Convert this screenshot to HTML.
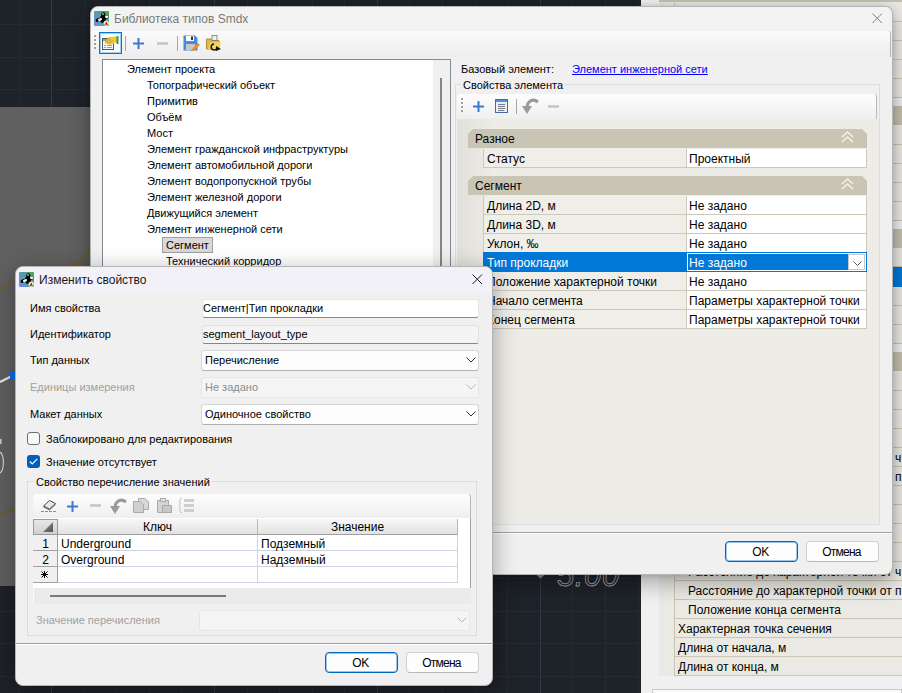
<!DOCTYPE html>
<html><head><meta charset="utf-8">
<style>
*{box-sizing:border-box;margin:0;padding:0}
html,body{width:902px;height:693px;overflow:hidden;background:#1e2229;position:relative;font-family:"Liberation Sans",sans-serif}
.a{position:absolute}
.t{position:absolute;font-size:11px;line-height:16px;white-space:nowrap;color:#000}
</style></head><body>

<!-- ===== BACKGROUND CAD ===== -->
<svg class="a" style="left:0;top:0" width="902" height="693">
  <g stroke="#262b33" stroke-width="1"><line x1="19.5" y1="0" x2="19.5" y2="693"/><line x1="84.5" y1="0" x2="84.5" y2="693"/><line x1="116.5" y1="0" x2="116.5" y2="693"/><line x1="149.5" y1="0" x2="149.5" y2="693"/><line x1="181.5" y1="0" x2="181.5" y2="693"/><line x1="247.5" y1="0" x2="247.5" y2="693"/><line x1="279.5" y1="0" x2="279.5" y2="693"/><line x1="312.5" y1="0" x2="312.5" y2="693"/><line x1="344.5" y1="0" x2="344.5" y2="693"/><line x1="409.5" y1="0" x2="409.5" y2="693"/><line x1="442.5" y1="0" x2="442.5" y2="693"/><line x1="475.5" y1="0" x2="475.5" y2="693"/><line x1="507.5" y1="0" x2="507.5" y2="693"/><line x1="572.5" y1="0" x2="572.5" y2="693"/><line x1="605.5" y1="0" x2="605.5" y2="693"/><line x1="638.5" y1="0" x2="638.5" y2="693"/><line x1="670.5" y1="0" x2="670.5" y2="693"/><line x1="735.5" y1="0" x2="735.5" y2="693"/><line x1="768.5" y1="0" x2="768.5" y2="693"/><line x1="800.5" y1="0" x2="800.5" y2="693"/><line x1="833.5" y1="0" x2="833.5" y2="693"/><line x1="898.5" y1="0" x2="898.5" y2="693"/><line x1="0" y1="24.5" x2="902" y2="24.5"/><line x1="0" y1="57.5" x2="902" y2="57.5"/><line x1="0" y1="89.5" x2="902" y2="89.5"/><line x1="0" y1="122.5" x2="902" y2="122.5"/><line x1="0" y1="154.5" x2="902" y2="154.5"/><line x1="0" y1="187.5" x2="902" y2="187.5"/><line x1="0" y1="220.5" x2="902" y2="220.5"/><line x1="0" y1="252.5" x2="902" y2="252.5"/><line x1="0" y1="285.5" x2="902" y2="285.5"/><line x1="0" y1="317.5" x2="902" y2="317.5"/><line x1="0" y1="350.5" x2="902" y2="350.5"/><line x1="0" y1="382.5" x2="902" y2="382.5"/><line x1="0" y1="415.5" x2="902" y2="415.5"/><line x1="0" y1="448.5" x2="902" y2="448.5"/><line x1="0" y1="480.5" x2="902" y2="480.5"/><line x1="0" y1="513.5" x2="902" y2="513.5"/><line x1="0" y1="545.5" x2="902" y2="545.5"/><line x1="0" y1="578.5" x2="902" y2="578.5"/><line x1="0" y1="611.5" x2="902" y2="611.5"/><line x1="0" y1="643.5" x2="902" y2="643.5"/><line x1="0" y1="676.5" x2="902" y2="676.5"/></g>
  <g stroke="#323844" stroke-width="1"><line x1="51.5" y1="0" x2="51.5" y2="693"/><line x1="214.5" y1="0" x2="214.5" y2="693"/><line x1="377.5" y1="0" x2="377.5" y2="693"/><line x1="540.5" y1="0" x2="540.5" y2="693"/><line x1="703.5" y1="0" x2="703.5" y2="693"/><line x1="866.5" y1="0" x2="866.5" y2="693"/></g>
  <rect x="0" y="107" width="200" height="479" fill="#606060"/>
  <polyline points="0,514.5 15,509.5" stroke="#7a5c14" stroke-width="1.2" fill="none"/>
  <polyline points="0,289 15,281 68,266 79,263 90,249" stroke="#7a5c14" stroke-width="1.3" fill="none"/>
  <polyline points="0,382 11,376.5" stroke="#e8e8e8" stroke-width="2.2" fill="none"/>
  <rect x="10" y="371" width="5" height="9" fill="#0a6ef0"/>
  <path d="M0,452 C4.5,455 4.5,470 0,473" stroke="#d8d8d8" stroke-width="1.1" fill="none"/><rect x="0" y="439" width="1.5" height="5" fill="#d0d0d0"/>
  <text x="557" y="586" font-family="Liberation Sans" font-size="31" font-style="italic" letter-spacing="0.6" fill="none" stroke="#9a9ea4" stroke-width="0.9">5.00</text>
  <path d="M536.5,575 H544.5 L540.5,578.5 Z" fill="#8a8e94"/>
</svg>

<!-- ===== RIGHT PALETTE ===== -->
<div class="a" style="left:641px;top:0;width:261px;height:693px;background:#f0f0f0"></div>
<div class="a" id="pal" style="left:659px;top:0;width:243px;height:676px;background:#ebe9e3"></div>
<div class="a" style="left:659px;top:-18px;width:243px;height:20px;background:#c4c0ae"></div>
<div class="a" style="left:674px;top:3px;width:228px;height:19px;border-left:1px solid #c9c5b2;border-bottom:1px solid #c9c5b2"></div>
<div class="a" style="left:674px;top:22px;width:228px;height:19px;border-left:1px solid #c9c5b2;border-bottom:1px solid #c9c5b2"></div>
<div class="a" style="left:674px;top:41px;width:228px;height:19px;border-left:1px solid #c9c5b2;border-bottom:1px solid #c9c5b2"></div>
<div class="a" style="left:674px;top:60px;width:228px;height:19px;border-left:1px solid #c9c5b2;border-bottom:1px solid #c9c5b2"></div>
<div class="a" style="left:674px;top:79px;width:228px;height:19px;border-left:1px solid #c9c5b2;border-bottom:1px solid #c9c5b2"></div>
<div class="a" style="left:659px;top:98px;width:243px;height:8px;background:#efefef"></div>
<div class="a" style="left:659px;top:106px;width:243px;height:19px;background:#c4c0ae"></div>
<div class="a" style="left:674px;top:126px;width:228px;height:19px;border-left:1px solid #c9c5b2;border-bottom:1px solid #c9c5b2"></div>
<div class="a" style="left:674px;top:145px;width:228px;height:19px;border-left:1px solid #c9c5b2;border-bottom:1px solid #c9c5b2"></div>
<div class="a" style="left:674px;top:164px;width:228px;height:19px;border-left:1px solid #c9c5b2;border-bottom:1px solid #c9c5b2"></div>
<div class="a" style="left:674px;top:183px;width:228px;height:19px;border-left:1px solid #c9c5b2;border-bottom:1px solid #c9c5b2"></div>
<div class="a" style="left:674px;top:202px;width:228px;height:19px;border-left:1px solid #c9c5b2;border-bottom:1px solid #c9c5b2"></div>
<div class="a" style="left:659px;top:221px;width:243px;height:8px;background:#efefef"></div>
<div class="a" style="left:659px;top:229px;width:243px;height:19px;background:#c4c0ae"></div>
<div class="a" style="left:674px;top:249px;width:228px;height:18px;border-left:1px solid #c9c5b2;border-bottom:1px solid #c9c5b2"></div>
<div class="a" style="left:674px;top:267px;width:228px;height:20px;background:#0078d7"></div>
<div class="a" style="left:674px;top:287px;width:228px;height:19px;border-left:1px solid #c9c5b2;border-bottom:1px solid #c9c5b2"></div>
<div class="a" style="left:674px;top:306px;width:228px;height:19px;border-left:1px solid #c9c5b2;border-bottom:1px solid #c9c5b2"></div>
<div class="a" style="left:674px;top:325px;width:228px;height:19px;border-left:1px solid #c9c5b2;border-bottom:1px solid #c9c5b2"></div>
<div class="a" style="left:659px;top:344px;width:243px;height:8px;background:#efefef"></div>
<div class="a" style="left:659px;top:352px;width:243px;height:19px;background:#c4c0ae"></div>
<div class="a" style="left:674px;top:372px;width:228px;height:19px;border-left:1px solid #c9c5b2;border-bottom:1px solid #c9c5b2"></div>
<div class="a" style="left:674px;top:391px;width:228px;height:19px;border-left:1px solid #c9c5b2;border-bottom:1px solid #c9c5b2"></div>
<div class="a" style="left:674px;top:410px;width:228px;height:19px;border-left:1px solid #c9c5b2;border-bottom:1px solid #c9c5b2"></div>
<div class="a" style="left:674px;top:429px;width:228px;height:19px;border-left:1px solid #c9c5b2;border-bottom:1px solid #c9c5b2"></div>
<div class="a" style="left:674px;top:448px;width:228px;height:19px;border-left:1px solid #c9c5b2;border-bottom:1px solid #c9c5b2"></div>
<div class="t" style="left:688px;top:450px;font-size:12px;line-height:16px">Расстояние до характерной точки от ч</div>
<div class="a" style="left:674px;top:467px;width:228px;height:19px;border-left:1px solid #c9c5b2;border-bottom:1px solid #c9c5b2"></div>
<div class="t" style="left:688px;top:469px;font-size:12px;line-height:16px">Расстояние до характерной точки от п</div>
<div class="a" style="left:674px;top:486px;width:228px;height:19px;border-left:1px solid #c9c5b2;border-bottom:1px solid #c9c5b2"></div>
<div class="a" style="left:674px;top:505px;width:228px;height:19px;border-left:1px solid #c9c5b2;border-bottom:1px solid #c9c5b2"></div>
<div class="a" style="left:674px;top:524px;width:228px;height:19px;border-left:1px solid #c9c5b2;border-bottom:1px solid #c9c5b2"></div>
<div class="a" style="left:674px;top:543px;width:228px;height:19px;border-left:1px solid #c9c5b2;border-bottom:1px solid #c9c5b2"></div>
<div class="a" style="left:674px;top:562px;width:228px;height:19px;border-left:1px solid #c9c5b2;border-bottom:1px solid #c9c5b2"></div>
<div class="t" style="left:688px;top:564px;font-size:12px;line-height:16px">Расстояние до характерной точки от ч</div>
<div class="a" style="left:674px;top:581px;width:228px;height:19px;border-left:1px solid #c9c5b2;border-bottom:1px solid #c9c5b2"></div>
<div class="t" style="left:688px;top:583px;font-size:12px;line-height:16px">Расстояние до характерной точки от п</div>
<div class="a" style="left:674px;top:600px;width:228px;height:19px;border-left:1px solid #c9c5b2;border-bottom:1px solid #c9c5b2"></div>
<div class="t" style="left:688px;top:602px;font-size:12px;line-height:16px">Положение конца сегмента</div>
<div class="a" style="left:674px;top:619px;width:228px;height:19px;border-left:1px solid #c9c5b2;border-bottom:1px solid #c9c5b2"></div>
<div class="t" style="left:678px;top:621px;font-size:12px;line-height:16px">Характерная точка сечения</div>
<div class="a" style="left:674px;top:638px;width:228px;height:19px;border-left:1px solid #c9c5b2;border-bottom:1px solid #c9c5b2"></div>
<div class="t" style="left:678px;top:640px;font-size:12px;line-height:16px">Длина от начала, м</div>
<div class="a" style="left:674px;top:657px;width:228px;height:19px;border-left:1px solid #c9c5b2;border-bottom:1px solid #c9c5b2"></div>
<div class="t" style="left:678px;top:659px;font-size:12px;line-height:16px">Длина от конца, м</div>
<div class="a" style="left:652px;top:689px;width:250px;height:10px;border:1px solid #c8c8c8;background:#fafafa"></div>

<!-- ===== MAIN DIALOG ===== -->
<div class="a" id="main" style="left:90px;top:6px;width:803px;height:569px;background:#f0f0f0;border:1px solid #b4b4b4;border-radius:8px;box-shadow:0 8px 22px rgba(0,0,0,.32),0 0 6px rgba(0,0,0,.12);overflow:hidden">
</div>


<!-- title bar -->
<div class="a" style="left:91px;top:7px;width:801px;height:24px;background:#f3f3f3;border-radius:7px 7px 0 0"></div>
<svg class="a" style="left:94px;top:11px" width="15" height="15" viewBox="0 0 15 15">
  <defs><linearGradient id="ig1" x1="0" y1="1" x2="1" y2="0"><stop offset="0" stop-color="#7090d8"/><stop offset=".55" stop-color="#5a98b0"/><stop offset="1" stop-color="#48a83a"/></linearGradient></defs>
  <rect x="0" y="0" width="15" height="15" rx="1" fill="url(#ig1)"/>
  <ellipse cx="9" cy="8" rx="3" ry="4" fill="#000"/>
  <circle cx="9.3" cy="3.2" r="2" fill="#000"/><circle cx="9" cy="3" r="0.9" fill="#bbb"/>
  <path d="M1.5,9.5 Q2.5,7 6.5,6.8 L8,8.5 Q5,10.5 2.5,11 Z" fill="#000"/>
  <ellipse cx="6" cy="8.6" rx="2.2" ry="1.3" transform="rotate(-20 6 8.6)" fill="#fff"/>
  <path d="M10,5 Q13,3.5 14.5,5 L13.5,7.5 Q11.5,8 10,7 Z" fill="#000"/>
  <ellipse cx="12.6" cy="5.8" rx="1.6" ry="1.2" fill="#fff"/>
  <circle cx="12.3" cy="12.3" r="2.7" fill="#f4fff4" stroke="#5cb85c" stroke-width=".6"/>
  <path d="M10.6,13.8 L12.3,10.6 L14,13.8 Z" fill="#e00000"/>
</svg>
<div class="t" style="left:114px;top:11px;font-size:12px;color:#7a7a7a">Библиотека типов Smdx</div>
<svg class="a" style="left:872px;top:13px" width="11" height="11"><path d="M0.5,0.5 L10,10 M10,0.5 L0.5,10" stroke="#808080" stroke-width="1"/></svg>

<!-- toolbar -->
<div class="a" style="left:91px;top:31px;width:800px;height:26px;background:linear-gradient(#fbfbfb,#ededed);border-right:1px solid #b4b4b4;border-radius:0 3px 0 0"></div>
<div class="a" style="left:94px;top:35px;width:2px;height:14px;background:repeating-linear-gradient(#a0a0a0 0 2px,transparent 2px 4px)"></div>
<div class="a" style="left:99px;top:32px;width:23px;height:22px;border:1px solid #0078d7;box-shadow:inset 0 0 0 1px rgba(0,120,215,.35);background:#fafcfe"></div>
<svg class="a" style="left:100px;top:34px" width="21" height="19" viewBox="0 0 21 19">
  <rect x="2.5" y="4.5" width="11" height="11" fill="#f6f9fd" stroke="#555" stroke-width="1"/>
  <rect x="3" y="5" width="4" height="2" fill="#7aa0e0"/>
  <path d="M4,11.5 h2 M7,11.5 h5 M4,13.5 h2 M7,13.5 h5" stroke="#8aa0c8" stroke-width="1"/>
  <path d="M4,9 L8,4 L9,3 L16,2.5 L17.5,4 L17,8 L14,9.5 L10,11 Z" fill="#f0c838"/>
  <path d="M5,8 L9,4 M7,9 L11,5 M9,10 L13,6 M6,5.5 L10,9.5 M8,4 L12,8" stroke="#a08a30" stroke-width=".6" opacity=".8"/>
  <rect x="16.5" y="2" width="2" height="8" fill="#3a9a3a"/>
</svg>
<div class="a" style="left:125px;top:36px;width:1px;height:15px;background:#a8a8a8"></div>
<svg class="a" style="left:133px;top:38px" width="11" height="11"><path d="M5.5,0 V11 M0,5.5 H11" stroke="#3a78d4" stroke-width="2"/></svg>
<svg class="a" style="left:157px;top:38px" width="11" height="11"><path d="M0,5.5 H11" stroke="#c4c4c4" stroke-width="2.5"/></svg>
<div class="a" style="left:177px;top:36px;width:1px;height:15px;background:#a8a8a8"></div>
<svg class="a" style="left:183px;top:35px" width="17" height="16" viewBox="0 0 17 16">
  <path d="M0.5,0.5 H12 L14.5,3 V15.5 H0.5 Z" fill="#4a8ad8"/>
  <rect x="3" y="1" width="8" height="5" fill="#fff"/><rect x="8" y="1.5" width="2" height="3.5" fill="#333"/>
  <rect x="3" y="9" width="9" height="6" fill="#c8c8c8"/>
  <path d="M8,15 L15,8 L17,10 L10,16 L8,16 Z" fill="#f09018"/>
</svg>
<svg class="a" style="left:206px;top:35px" width="16" height="16" viewBox="0 0 16 16">
  <path d="M0.5,4 H5 L6,5.5 H13 V14 H0.5 Z" fill="#e0b840" stroke="#a08020" stroke-width=".8"/>
  <rect x="6" y="0.5" width="5" height="5" fill="#eee" stroke="#777" stroke-width=".8"/>
  <path d="M2,14 L4,7 H15 L13,14 Z" fill="#f5d060"/>
  <path d="M8,9 a3,3 0 1 0 3,4" stroke="#111" stroke-width="1.4" fill="none"/><path d="M10,11 L15,14 L10,16 Z" fill="#111"/>
</svg>

<!-- tree -->
<div class="a" style="left:102px;top:59px;width:349px;height:466px;background:#fff;border:1px solid #828790"></div>
<div class="a" style="left:433px;top:60px;width:17px;height:464px;background:#f0f0f0"></div>
<div class="a" style="left:440px;top:78px;width:2px;height:440px;background:#858585"></div>
<div class="t" style="left:127px;top:61px">Элемент проекта</div>
<div class="t" style="left:147px;top:77px">Топографический объект</div>
<div class="t" style="left:147px;top:93px">Примитив</div>
<div class="t" style="left:147px;top:109px">Объём</div>
<div class="t" style="left:147px;top:125px">Мост</div>
<div class="t" style="left:147px;top:141px">Элемент гражданской инфраструктуры</div>
<div class="t" style="left:147px;top:157px">Элемент автомобильной дороги</div>
<div class="t" style="left:147px;top:173px">Элемент водопропускной трубы</div>
<div class="t" style="left:147px;top:189px">Элемент железной дороги</div>
<div class="t" style="left:147px;top:205px">Движущийся элемент</div>
<div class="t" style="left:147px;top:221px">Элемент инженерной сети</div>
<div class="a" style="left:162px;top:237px;width:51px;height:16px;background:#d9d9d9;border:1px solid #a0a0a0"></div>
<div class="t" style="left:166px;top:237px">Сегмент</div>
<div class="t" style="left:166px;top:253px">Технический корридор</div>

<!-- base element -->
<div class="t" style="left:461px;top:61px">Базовый элемент:</div>
<div class="t" style="left:572px;top:61px;color:#0000ff;text-decoration:underline">Элемент инженерной сети</div>

<!-- group box -->
<div class="a" style="left:455px;top:84px;width:425px;height:441px;border:1px solid #dcdcdc"></div>
<div class="t" style="left:461px;top:77px;background:#f0f0f0;padding:0 2px">Свойства элемента</div>
<div class="a" style="left:457px;top:94px;width:420px;height:25px;background:linear-gradient(#fdfdfd,#efefef);border-radius:3px 3px 0 0;border-right:1px solid #b8b8b8"></div>
<div class="a" style="left:461px;top:98px;width:2px;height:14px;background:repeating-linear-gradient(#a0a0a0 0 2px,transparent 2px 4px)"></div>
<svg class="a" style="left:473px;top:101px" width="11" height="11"><path d="M5.5,0 V11 M0,5.5 H11" stroke="#3a78d4" stroke-width="2"/></svg>
<svg class="a" style="left:495px;top:99px" width="13" height="14" viewBox="0 0 13 14">
  <rect x="0.5" y="0.5" width="12" height="13" fill="#e6eef9" stroke="#4a68a8"/>
  <rect x="1" y="1" width="11" height="2" fill="#5a8ae0"/>
  <path d="M3,5.5 h7 M3,7.5 h7 M3,9.5 h7 M3,11.5 h6" stroke="#7a7f8a" stroke-width="1"/>
</svg>
<div class="a" style="left:516px;top:99px;width:1px;height:15px;background:#a8a8a8"></div>
<svg class="a" style="left:522px;top:98px" width="17" height="16" viewBox="0 0 17 16">
  <path d="M16,4 C11,0 5,3 5,10" stroke="#9a9a9a" stroke-width="3" fill="none"/>
  <path d="M0,8 L10,8 L5,16 Z" fill="#9a9a9a"/>
</svg>
<svg class="a" style="left:548px;top:105px" width="11" height="3"><path d="M0,1.5 H11" stroke="#c4c4c4" stroke-width="2.5"/></svg>

<!-- property grid -->
<div class="a" style="left:457px;top:119px;width:422px;height:405px;background:linear-gradient(90deg,#e2e0da,#eeece7 40px)"></div>

<svg class="a" style="left:468px;top:129px" width="399" height="19"><path d="M0,5 L5,0 H394 L399,5 V19 H0 Z" fill="#c8c5b4"/>
<path d="M374,8 L379.5,3 L385,8 M374,13 L379.5,8 L385,13" stroke="#f6f4d8" stroke-width="1.6" fill="none"/></svg>
<div class="t" style="left:475px;top:131px;font-size:12px">Разное</div>
<div class="a" style="left:483px;top:149px;width:384px;height:19px;background:#f0eee9;border-left:1px solid #cdc9b8;border-right:1px solid #cdc9b8;border-bottom:1px solid #cdc9b8"></div><div class="a" style="left:686px;top:149px;width:181px;height:19px;background:#fff;border-left:1px solid #cdc9b8;border-right:1px solid #cdc9b8;border-bottom:1px solid #cdc9b8"></div><div class="t" style="left:487px;top:151px;font-size:12px">Статус</div><div class="t" style="left:689px;top:151px;font-size:12px">Проектный</div>
<svg class="a" style="left:468px;top:176px" width="399" height="19"><path d="M0,5 L5,0 H394 L399,5 V19 H0 Z" fill="#c8c5b4"/>
<path d="M374,8 L379.5,3 L385,8 M374,13 L379.5,8 L385,13" stroke="#f6f4d8" stroke-width="1.6" fill="none"/></svg>
<div class="t" style="left:475px;top:178px;font-size:12px">Сегмент</div>
<div class="a" style="left:483px;top:196px;width:384px;height:19px;background:#f0eee9;border-left:1px solid #cdc9b8;border-right:1px solid #cdc9b8;border-bottom:1px solid #cdc9b8"></div><div class="a" style="left:686px;top:196px;width:181px;height:19px;background:#fff;border-left:1px solid #cdc9b8;border-right:1px solid #cdc9b8;border-bottom:1px solid #cdc9b8"></div><div class="t" style="left:487px;top:198px;font-size:12px">Длина 2D, м</div><div class="t" style="left:689px;top:198px;font-size:12px">Не задано</div>
<div class="a" style="left:483px;top:215px;width:384px;height:19px;background:#f0eee9;border-left:1px solid #cdc9b8;border-right:1px solid #cdc9b8;border-bottom:1px solid #cdc9b8"></div><div class="a" style="left:686px;top:215px;width:181px;height:19px;background:#fff;border-left:1px solid #cdc9b8;border-right:1px solid #cdc9b8;border-bottom:1px solid #cdc9b8"></div><div class="t" style="left:487px;top:217px;font-size:12px">Длина 3D, м</div><div class="t" style="left:689px;top:217px;font-size:12px">Не задано</div>
<div class="a" style="left:483px;top:234px;width:384px;height:19px;background:#f0eee9;border-left:1px solid #cdc9b8;border-right:1px solid #cdc9b8;border-bottom:1px solid #cdc9b8"></div><div class="a" style="left:686px;top:234px;width:181px;height:19px;background:#fff;border-left:1px solid #cdc9b8;border-right:1px solid #cdc9b8;border-bottom:1px solid #cdc9b8"></div><div class="t" style="left:487px;top:236px;font-size:12px">Уклон, ‰</div><div class="t" style="left:689px;top:236px;font-size:12px">Не задано</div>
<div class="a" style="left:483px;top:253px;width:384px;height:19px;background:#f0eee9;border-left:1px solid #cdc9b8;border-right:1px solid #cdc9b8;border-bottom:1px solid #cdc9b8"></div><div class="a" style="left:686px;top:253px;width:181px;height:19px;background:#fff;border-left:1px solid #cdc9b8;border-right:1px solid #cdc9b8;border-bottom:1px solid #cdc9b8"></div><div class="a" style="left:483px;top:252px;width:384px;height:20px;background:#0078d7"></div><div class="a" style="left:687px;top:253px;width:179px;height:18px;border:1px solid #fff"></div><div class="a" style="left:848px;top:254px;width:17px;height:16px;background:#fff;border:1px solid #c8c8c8"></div><svg class="a" style="left:853px;top:261px" width="9" height="5"><path d="M0.5,0.5 L4.5,4.5 L8.5,0.5" stroke="#555" stroke-width="1" fill="none"/></svg><div class="t" style="left:487px;top:255px;font-size:12px;color:#fff">Тип прокладки</div><div class="t" style="left:689px;top:255px;font-size:12px;color:#fff">Не задано</div>
<div class="a" style="left:483px;top:272px;width:384px;height:19px;background:#f0eee9;border-left:1px solid #cdc9b8;border-right:1px solid #cdc9b8;border-bottom:1px solid #cdc9b8"></div><div class="a" style="left:686px;top:272px;width:181px;height:19px;background:#fff;border-left:1px solid #cdc9b8;border-right:1px solid #cdc9b8;border-bottom:1px solid #cdc9b8"></div><div class="t" style="left:487px;top:274px;font-size:12px">Положение характерной точки</div><div class="t" style="left:689px;top:274px;font-size:12px">Не задано</div>
<div class="a" style="left:483px;top:291px;width:384px;height:19px;background:#f0eee9;border-left:1px solid #cdc9b8;border-right:1px solid #cdc9b8;border-bottom:1px solid #cdc9b8"></div><div class="a" style="left:686px;top:291px;width:181px;height:19px;background:#fff;border-left:1px solid #cdc9b8;border-right:1px solid #cdc9b8;border-bottom:1px solid #cdc9b8"></div><div class="t" style="left:487px;top:293px;font-size:12px">Начало сегмента</div><div class="t" style="left:689px;top:293px;font-size:12px">Параметры характерной точки</div>
<div class="a" style="left:483px;top:310px;width:384px;height:19px;background:#f0eee9;border-left:1px solid #cdc9b8;border-right:1px solid #cdc9b8;border-bottom:1px solid #cdc9b8"></div><div class="a" style="left:686px;top:310px;width:181px;height:19px;background:#fff;border-left:1px solid #cdc9b8;border-right:1px solid #cdc9b8;border-bottom:1px solid #cdc9b8"></div><div class="t" style="left:487px;top:312px;font-size:12px">Конец сегмента</div><div class="t" style="left:689px;top:312px;font-size:12px">Параметры характерной точки</div>
<!-- separator & buttons -->
<div class="a" style="left:91px;top:532px;width:801px;height:1px;background:#a0a0a0"></div>
<div class="a" style="left:91px;top:533px;width:801px;height:1px;background:#fff"></div>
<div class="a" style="left:725px;top:541px;width:73px;height:21px;background:#fdfdfd;border:1px solid #0067c0;border-radius:4px;box-shadow:inset 0 0 0 1px #9cc4ec"></div>
<div class="t" style="left:724px;top:544px;width:73px;text-align:center;font-size:12px;letter-spacing:-0.4px">OK</div>
<div class="a" style="left:806px;top:541px;width:73px;height:21px;background:#fdfdfd;border:1px solid #d0d0d0;border-bottom-color:#b8b8b8;border-radius:4px"></div>
<div class="t" style="left:805px;top:544px;width:73px;text-align:center;font-size:12px;letter-spacing:-0.75px">Отмена</div>

<!-- ===== BOTTOM DIALOG ===== -->
<div class="a" id="dlg" style="left:15px;top:266px;width:478px;height:420px;background:#f0f0f0;border:1px solid #b4b4b4;border-radius:8px;box-shadow:0 6px 24px rgba(0,0,0,.35);overflow:hidden">
</div>
<div class="a" style="left:16px;top:267px;width:476px;height:25px;background:#f3f1f8;border-radius:7px 7px 0 0"></div>
<svg class="a" style="left:19px;top:272px" width="15" height="15" viewBox="0 0 15 15">
  <defs><linearGradient id="ig2" x1="0" y1="1" x2="1" y2="0"><stop offset="0" stop-color="#7090d8"/><stop offset=".55" stop-color="#5a98b0"/><stop offset="1" stop-color="#48a83a"/></linearGradient></defs>
  <rect x="0" y="0" width="15" height="15" rx="1" fill="url(#ig2)"/>
  <ellipse cx="9" cy="8" rx="3" ry="4" fill="#000"/>
  <circle cx="9.3" cy="3.2" r="2" fill="#000"/><circle cx="9" cy="3" r="0.9" fill="#bbb"/>
  <path d="M1.5,9.5 Q2.5,7 6.5,6.8 L8,8.5 Q5,10.5 2.5,11 Z" fill="#000"/>
  <ellipse cx="6" cy="8.6" rx="2.2" ry="1.3" transform="rotate(-20 6 8.6)" fill="#fff"/>
  <path d="M10,5 Q13,3.5 14.5,5 L13.5,7.5 Q11.5,8 10,7 Z" fill="#000"/>
  <ellipse cx="12.6" cy="5.8" rx="1.6" ry="1.2" fill="#fff"/>
  <circle cx="12.3" cy="12.3" r="2.7" fill="#f4fff4" stroke="#5cb85c" stroke-width=".6"/>
  <path d="M10.6,13.8 L12.3,10.6 L14,13.8 Z" fill="#e00000"/>
</svg>
<div class="t" style="left:39px;top:272px;font-size:12px;color:#1a1a1a">Изменить свойство</div>
<svg class="a" style="left:472px;top:274px" width="11" height="11"><path d="M0.5,0.5 L10,10 M10,0.5 L0.5,10" stroke="#1a1a1a" stroke-width="1"/></svg>

<div class="t" style="left:30px;top:300px">Имя свойства</div>
<div class="t" style="left:30px;top:326px">Идентификатор</div>
<div class="t" style="left:30px;top:352px">Тип данных</div>
<div class="t" style="left:30px;top:379px;color:#a0a0a0">Единицы измерения</div>
<div class="t" style="left:30px;top:406px">Макет данных</div>

<div class="a" style="left:202px;top:299px;width:277px;height:19px;background:#fff;border:1px solid #e6e6e6;border-bottom:1px solid #868686;border-radius:3px"></div>
<div class="t" style="left:203px;top:300px">Сегмент|Тип прокладки</div>
<div class="a" style="left:202px;top:325px;width:277px;height:19px;background:#f4f4f4;border:1px solid #e2e2e2;border-bottom:1px solid #868686;border-radius:3px"></div>
<div class="t" style="left:203px;top:326px">segment_layout_type</div>

<div class="a" style="left:201px;top:350px;width:278px;height:21px;background:#fdfdfd;border:1px solid #d6d6d6;border-bottom-color:#b0b0b0;border-radius:3px"></div>
<div class="t" style="left:205px;top:352px">Перечисление</div>
<svg class="a" style="left:466px;top:357px" width="10" height="6"><path d="M0.5,0.5 L5,5 L9.5,0.5" stroke="#333" stroke-width="1" fill="none"/></svg>
<div class="a" style="left:201px;top:377px;width:278px;height:21px;background:#f5f5f5;border:1px solid #e6e6e6;border-radius:3px"></div>
<div class="t" style="left:205px;top:379px;color:#8c8c8c">Не задано</div>
<svg class="a" style="left:466px;top:384px" width="10" height="6"><path d="M0.5,0.5 L5,5 L9.5,0.5" stroke="#b8b8b8" stroke-width="1" fill="none"/></svg>
<div class="a" style="left:201px;top:404px;width:278px;height:21px;background:#fdfdfd;border:1px solid #d6d6d6;border-bottom-color:#b0b0b0;border-radius:3px"></div>
<div class="t" style="left:205px;top:406px">Одиночное свойство</div>
<svg class="a" style="left:466px;top:411px" width="10" height="6"><path d="M0.5,0.5 L5,5 L9.5,0.5" stroke="#333" stroke-width="1" fill="none"/></svg>

<div class="a" style="left:27px;top:432px;width:13px;height:13px;background:#f8f8f8;border:1px solid #6e6e6e;border-radius:3px"></div>
<div class="t" style="left:46px;top:431px">Заблокировано для редактирования</div>
<div class="a" style="left:27px;top:455px;width:13px;height:13px;background:#005fb8;border-radius:3px"></div>
<svg class="a" style="left:29px;top:458px" width="9" height="7"><path d="M0.8,3.5 L3.3,6 L8.3,0.8" stroke="#fff" stroke-width="1.2" fill="none"/></svg>
<div class="t" style="left:46px;top:454px">Значение отсутствует</div>

<!-- group box -->
<div class="a" style="left:27px;top:481px;width:450px;height:155px;border:1px solid #dcdcdc"></div>
<div class="t" style="left:34px;top:474px;background:#f0f0f0;padding:0 2px">Свойство перечисление значений</div>
<div class="a" style="left:33px;top:494px;width:438px;height:24px;background:linear-gradient(#fdfdfd,#efefef);border-radius:3px 3px 0 0;border-right:1px solid #b8b8b8"></div>
<svg class="a" style="left:41px;top:499px" width="16" height="13" viewBox="0 0 16 13">
  <path d="M2.5,7 L8.5,1.5 L14.5,4.5 L8.5,10 Z" fill="#e8e8e8" stroke="#444" stroke-width="1"/>
  <path d="M2.5,7 V8.5 L8.5,11.5 L14.5,6 V4.5 L8.5,10 Z" fill="#7a7a7a"/>
  <path d="M0,12.5 H16" stroke="#5a9ad8" stroke-width="1" stroke-dasharray="3,1"/>
</svg>
<svg class="a" style="left:67px;top:501px" width="11" height="11"><path d="M5.5,0 V11 M0,5.5 H11" stroke="#3a78d4" stroke-width="2"/></svg>
<svg class="a" style="left:90px;top:504px" width="11" height="3"><path d="M0,1.5 H11" stroke="#c4c4c4" stroke-width="2.5"/></svg>
<svg class="a" style="left:110px;top:498px" width="17" height="16" viewBox="0 0 17 16">
  <path d="M16,4 C11,0 5,3 5,10" stroke="#9a9a9a" stroke-width="3" fill="none"/>
  <path d="M0,8 L10,8 L5,16 Z" fill="#9a9a9a"/>
</svg>
<svg class="a" style="left:133px;top:498px" width="16" height="15" viewBox="0 0 16 15">
  <path d="M5.5,0.5 H12 L15.5,4 V11.5 H5.5 Z" fill="#d8d8d8" stroke="#aaa"/>
  <path d="M0.5,3.5 H7 L10.5,7 V14.5 H0.5 Z" fill="#d0d0d0" stroke="#aaa"/>
</svg>
<svg class="a" style="left:157px;top:498px" width="15" height="15" viewBox="0 0 15 15">
  <path d="M0.5,2.5 H11.5 V14.5 H0.5 Z" fill="#d4d4d4" stroke="#aaa"/>
  <rect x="3.5" y="0.5" width="5" height="3" fill="#e0e0e0" stroke="#aaa"/>
  <path d="M5.5,7.5 H14.5 V14.5 H5.5 Z" fill="#c8c8c8" stroke="#aaa"/>
</svg>
<svg class="a" style="left:179px;top:498px" width="16" height="15" viewBox="0 0 16 15">
  <path d="M3,0.5 C1,0.5 1,1 1,3 V6 L0,7.5 L1,9 V12 C1,14 1,14.5 3,14.5" stroke="#c0c0c0" fill="none"/>
  <rect x="5" y="1" width="10" height="3" fill="#cfcfcf"/><rect x="5" y="6" width="10" height="3" fill="#cfcfcf"/><rect x="5" y="11" width="10" height="3" fill="#cfcfcf"/>
</svg>

<!-- grid -->
<div class="a" style="left:33px;top:518px;width:438px;height:70px;background:#fff;border-right:1px solid #a0a0a0"></div>
<div class="a" style="left:33px;top:519px;width:425px;height:16px;background:linear-gradient(#f7f7f7,#e2e2e2);border-bottom:1px solid #a0a0a0"></div>
<div class="a" style="left:33px;top:519px;width:25px;height:16px;background:linear-gradient(#e8e8e8,#cfcfcf);border:1px solid #9a9a9a"></div>
<svg class="a" style="left:43px;top:522px" width="11" height="10"><defs><linearGradient id="tg" x1="0" y1="0" x2="1" y2="1"><stop offset="0" stop-color="#9a9a9a"/><stop offset="1" stop-color="#505050"/></linearGradient></defs><path d="M0,10 L10,0 V10 Z" fill="url(#tg)"/></svg>
<div class="a" style="left:257px;top:519px;width:1px;height:16px;background:#b8b8b8"></div>
<div class="a" style="left:457px;top:519px;width:1px;height:16px;background:#b8b8b8"></div>
<div class="t" style="left:58px;top:519px;width:199px;text-align:center;font-size:12px">Ключ</div>
<div class="t" style="left:258px;top:519px;width:199px;text-align:center;font-size:12px">Значение</div>
<div class="a" style="left:33px;top:535px;width:25px;height:48px;background:#f0f0f0"></div>
<div class="a" style="left:33px;top:550px;width:425px;height:1px;background:#cdd3e3"></div>
<div class="a" style="left:33px;top:566px;width:425px;height:1px;background:#cdd3e3"></div>
<div class="a" style="left:33px;top:582px;width:425px;height:1px;background:#cdd3e3"></div>
<div class="a" style="left:33px;top:550px;width:25px;height:1px;background:#a0a0a0"></div>
<div class="a" style="left:33px;top:566px;width:25px;height:1px;background:#a0a0a0"></div>
<div class="a" style="left:33px;top:582px;width:25px;height:1px;background:#a0a0a0"></div>
<div class="a" style="left:57px;top:535px;width:1px;height:48px;background:#a0a0a0"></div>
<div class="a" style="left:257px;top:535px;width:1px;height:48px;background:#cdd3e3"></div>
<div class="a" style="left:457px;top:535px;width:1px;height:48px;background:#cdd3e3"></div>
<div class="t" style="left:33px;top:536px;width:16px;text-align:right;font-size:12px">1</div>
<div class="t" style="left:33px;top:552px;width:16px;text-align:right;font-size:12px">2</div>
<svg class="a" style="left:41px;top:571px" width="8" height="8"><path d="M3.5,0 V7 M0,3.5 H7 M0.5,0.5 L6.5,6.5 M6.5,0.5 L0.5,6.5" stroke="#000" stroke-width="1"/><circle cx="3.5" cy="3.5" r="1.6" fill="#000"/></svg>
<div class="t" style="left:61px;top:536px;font-size:12px">Underground</div>
<div class="t" style="left:61px;top:552px;font-size:12px">Overground</div>
<div class="t" style="left:261px;top:536px;font-size:12px">Подземный</div>
<div class="t" style="left:261px;top:552px;font-size:12px">Надземный</div>
<div class="a" style="left:33px;top:588px;width:438px;height:16px;background:#ebebeb;border-left:1px solid #fafafa"></div>
<div class="a" style="left:50px;top:595px;width:176px;height:2px;background:#7a7a7a"></div>

<div class="t" style="left:36px;top:612px;color:#a0a0a0">Значение перечисления</div>
<div class="a" style="left:199px;top:610px;width:271px;height:21px;background:#f5f5f5;border:1px solid #e6e6e6;border-radius:3px"></div>
<svg class="a" style="left:457px;top:617px" width="10" height="6"><path d="M0.5,0.5 L5,5 L9.5,0.5" stroke="#b8b8b8" stroke-width="1" fill="none"/></svg>

<div class="a" style="left:16px;top:643px;width:476px;height:1px;background:#a0a0a0"></div>
<div class="a" style="left:16px;top:644px;width:476px;height:1px;background:#fff"></div>
<div class="a" style="left:325px;top:652px;width:73px;height:21px;background:#fdfdfd;border:1px solid #0067c0;border-radius:4px;box-shadow:inset 0 0 0 1px #9cc4ec"></div>
<div class="t" style="left:324px;top:655px;width:73px;text-align:center;font-size:12px;letter-spacing:-0.4px">OK</div>
<div class="a" style="left:406px;top:652px;width:73px;height:21px;background:#fdfdfd;border:1px solid #d0d0d0;border-bottom-color:#b8b8b8;border-radius:4px"></div>
<div class="t" style="left:405px;top:655px;width:73px;text-align:center;font-size:12px;letter-spacing:-0.75px">Отмена</div>


</body></html>
